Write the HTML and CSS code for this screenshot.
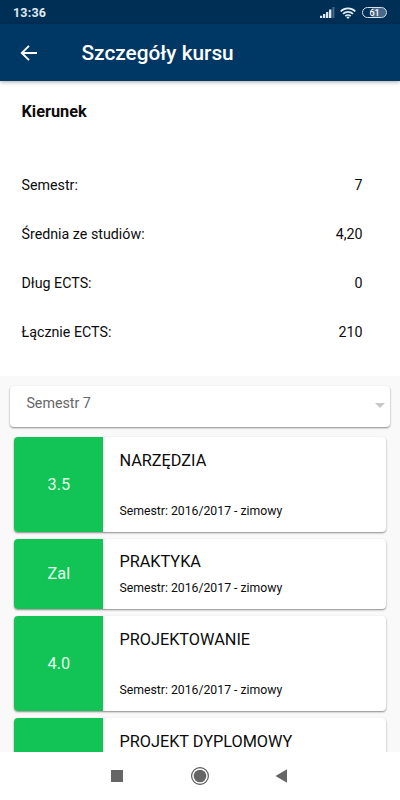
FILE: index.html
```
<!DOCTYPE html>
<html lang="pl">
<head>
    <meta charset="UTF-8">
    <meta name="viewport" content="width=device-width, initial-scale=1.0">
    <title>Szczegóły kursu</title>
    <link rel="stylesheet" href="styles.css">
</head>
<body>
    <div class="status-bar">
        <span class="clock">13:36</span>
        <div class="status-icons">
            <svg class="signal" width="15" height="11" viewBox="0 0 15 11">
                <path d="M0 8.7h2.2V11H0zM3 7h2.3v4H3zM6 5h2.3v6H6zM9 2.5h2.4V11H9z" fill="#dfe8ef"/>
                <path d="M12.4 0h2v11h-2z" fill="#46698a"/>
            </svg>
            <svg class="wifi" width="16" height="12" viewBox="0 0 16 12" fill="none" stroke="#e4ecf2" stroke-width="1.7">
                <path d="M.7 4.3a10.4 10.4 0 0 1 14.6 0M3 6.9a7.1 7.1 0 0 1 10 0M5.3 9.1a3.9 3.9 0 0 1 5.4 0"/>
                <path d="M8 11.9L6.4 10.2a2.3 2.3 0 0 1 3.2 0z" fill="#e4ecf2" stroke="none"/>
            </svg>
            <span class="battery">61</span>
        </div>
    </div>

    <header class="app-bar">
        <svg class="back" width="18" height="16" viewBox="0 0 18 16" fill="none" stroke="#fff" stroke-width="1.9">
            <path d="M17 8H2M9 .8L1.8 8L9 15.2"/>
        </svg>
        <h1>Szczegóły kursu</h1>
    </header>

    <section class="summary">
        <h2>Kierunek</h2>
        <div class="row"><span>Semestr:</span><span>7</span></div>
        <div class="row"><span>Średnia ze studiów:</span><span>4,20</span></div>
        <div class="row"><span>Dług ECTS:</span><span>0</span></div>
        <div class="row"><span>Łącznie ECTS:</span><span>210</span></div>
    </section>

    <main class="courses">
        <div class="select">
            <span>Semestr 7</span>
            <svg width="10" height="5" viewBox="0 0 10 5"><path d="M0 0h10L5 5z" fill="#c8c8c8"/></svg>
        </div>

        <div class="card">
            <div class="grade">3.5</div>
            <div class="info">
                <h3>NARZĘDZIA</h3>
                <p>Semestr: 2016/2017 - zimowy</p>
            </div>
        </div>
        <div class="card short">
            <div class="grade">Zal</div>
            <div class="info">
                <h3>PRAKTYKA</h3>
                <p>Semestr: 2016/2017 - zimowy</p>
            </div>
        </div>
        <div class="card">
            <div class="grade">4.0</div>
            <div class="info">
                <h3>PROJEKTOWANIE</h3>
                <p>Semestr: 2016/2017 - zimowy</p>
            </div>
        </div>
        <div class="card">
            <div class="grade"></div>
            <div class="info">
                <h3>PROJEKT DYPLOMOWY</h3>
            </div>
        </div>
    </main>

    <nav class="nav-bar">
        <svg width="180" height="20" viewBox="0 0 180 20">
            <rect x="1" y="4" width="12" height="12" fill="#666"/>
            <circle cx="90" cy="10" r="8.4" fill="none" stroke="#555" stroke-width="1.1"/>
            <circle cx="90" cy="10" r="6.3" fill="#666"/>
            <path d="M165.5 10L177 3.3v13.4z" fill="#666"/>
        </svg>
    </nav>
</body>
</html>
```
FILE: styles.css
```
* {
    box-sizing: border-box;
}
body {
    display: flex;
    flex-direction: column;
    height: 800px;
    margin: 0;
    overflow: hidden;
    font-family: Roboto, sans-serif;
    color: #0c0c0c;
    background: #fff;
}
h1, h2, h3, p {
    margin: 0;
}

/* top bars */
.status-bar {
    display: flex;
    flex: none;
    align-items: center;
    justify-content: space-between;
    height: 24px;
    padding: 1px 13px 0;
    background: #002f56;
}
.clock {
    font-size: 12.5px;
    font-weight: 700;
    letter-spacing: 0.2px;
    color: #dfe8ef;
}
.status-icons {
    display: flex;
    align-items: center;
}
.wifi {
    margin: 0 6px 0 5px;
}
.battery {
    width: 25px;
    height: 11px;
    border: 1px solid #d5e0e8;
    border-radius: 6px;
    background: linear-gradient(90deg, #002f56 38%, #47688a 38%);
    font-size: 9px;
    font-weight: 500;
    line-height: 10px;
    text-align: center;
    color: #fff;
}
.app-bar {
    display: flex;
    flex: none;
    align-items: center;
    height: 57px;
    padding-left: 20px;
    background: #003865;
    box-shadow: 0 1px 4px rgba(0,0,0,0.35);
}
.app-bar h1 {
    margin-left: 43.5px;
    font-size: 20.8px;
    font-weight: 500;
    color: #fff;
}

/* study summary */
.summary {
    flex: none;
    height: 295px;
    padding: 21px 37.5px 0 21.5px;
}
.summary h2 {
    height: 58px;
    font-size: 16.3px;
    font-weight: 700;
    line-height: 20px;
}
.row {
    display: flex;
    align-items: center;
    justify-content: space-between;
    height: 49px;
    font-size: 14.25px;
}

/* course list */
.courses {
    display: flex;
    flex: 1;
    flex-direction: column;
    min-height: 0;
    padding: 10px 14px 0 14.4px;
    overflow: hidden;
    background: #f9f9f9;
}
.select {
    display: flex;
    flex: none;
    align-items: center;
    justify-content: space-between;
    height: 41px;
    margin: 0 -4px 10px;
    padding: 0 5px 7px 16px;
    border-radius: 4px;
    background: #fff;
    box-shadow: 0 1px 2px rgba(0,0,0,0.45);
    font-size: 14.25px;
    color: #666;
}
.select svg {
    margin-top: 4px;
}
.card {
    display: flex;
    flex: none;
    height: 94.5px;
    margin-bottom: 7.3px;
    border-radius: 4px;
    background: #fff;
    box-shadow: 0 1px 2px rgba(0,0,0,0.45);
}
.card.short {
    height: 70px;
}
.grade {
    display: flex;
    align-items: center;
    justify-content: center;
    width: 89px;
    border-radius: 4px 0 0 4px;
    background: #11c455;
    font-size: 16.3px;
    color: #e3ffec;
}
.info {
    display: flex;
    flex: 1;
    flex-direction: column;
    justify-content: space-between;
    padding: 13.7px 16px 13px;
}
.info h3 {
    font-size: 16.3px;
    font-weight: 400;
    line-height: 19px;
}
.info p {
    font-size: 12.25px;
    line-height: 16px;
}

.nav-bar {
    display: flex;
    flex: none;
    align-items: center;
    justify-content: center;
    height: 48px;
    background: #fff;
}
```
